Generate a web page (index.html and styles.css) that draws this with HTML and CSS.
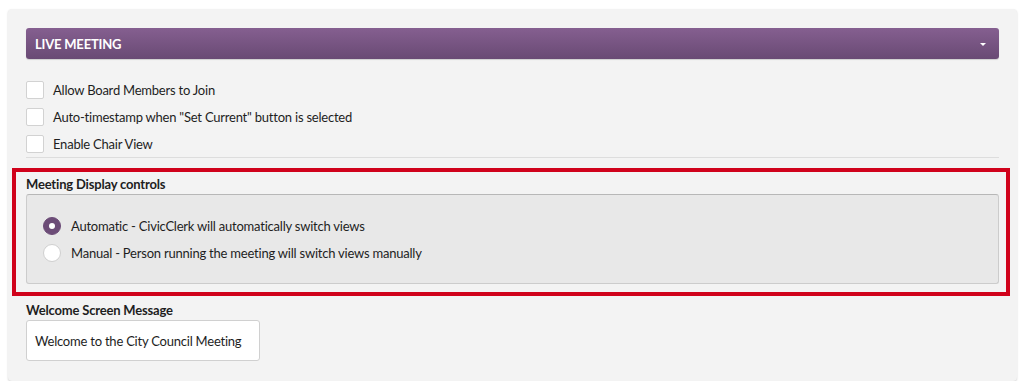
FILE: index.html
```html
<!DOCTYPE html>
<html>
<head>
<meta charset="utf-8">
<link rel="stylesheet" href="styles.css">
</head>
<body>
<div class="panel">
  <div class="panel-head">
    <span class="panel-title">LIVE MEETING</span>
    <span class="caret"></span>
  </div>
  <div class="checks">
    <label class="check-row"><span class="checkbox"></span><span>Allow Board Members to Join</span></label>
    <label class="check-row"><span class="checkbox"></span><span>Auto-timestamp when "Set Current" button is selected</span></label>
    <label class="check-row"><span class="checkbox"></span><span>Enable Chair View</span></label>
  </div>
  <div class="divider"></div>
  <div class="highlight">
    <div class="field-label">Meeting Display controls</div>
    <div class="radio-box">
      <label class="radio-row"><span class="radio checked"></span><span>Automatic - CivicClerk will automatically switch views</span></label>
      <label class="radio-row"><span class="radio"></span><span>Manual - Person running the meeting will switch views manually</span></label>
    </div>
  </div>
  <div class="field-label welcome-label">Welcome Screen Message</div>
  <div class="text-input">Welcome to the City Council Meeting</div>
</div>
</body>
</html>
```
FILE: styles.css
```css
html, body {
  margin: 0;
  padding: 0;
  background: #ffffff;
}
body {
  padding: 9px 8px 0 8px;
  font-family: Lato, "Open Sans", "Liberation Sans", sans-serif;
  font-size: 13px;
  letter-spacing: -0.22px;
  color: #1e1e1e;
}
.panel {
  width: 1009px;
  box-sizing: border-box;
  background: #f3f3f3;
  border-radius: 4px;
  box-shadow: 0 1px 2px rgba(0,0,0,0.18);
  padding: 19px 18px 20px 18px;
}
.panel-head {
  height: 31px;
  border-radius: 3px;
  background: linear-gradient(#855f90, #694a74);
  display: flex;
  align-items: center;
  justify-content: space-between;
  padding: 0 13px 0 9px;
  box-shadow: 0 1px 1px rgba(0,0,0,0.15);
}
.panel-title {
  color: #ffffff;
  font-weight: 700;
  font-size: 13px;
  letter-spacing: -0.2px;
}
.caret {
  width: 0;
  height: 0;
  border-left: 3px solid transparent;
  border-right: 3px solid transparent;
  border-top: 3px solid #ffffff;
  margin-top: 1px;
}
.checks {
  padding-top: 22px;
  display: flex;
  flex-direction: column;
  gap: 9px;
}
.check-row {
  display: flex;
  align-items: center;
  height: 18px;
  gap: 9px;
}
.checkbox {
  width: 16px;
  height: 16px;
  background: #ffffff;
  border: 1px solid #d2d2d2;
  border-radius: 2px;
  flex: none;
}
.divider {
  height: 1px;
  background: #dddddd;
  margin-top: 4px;
}
.highlight {
  border: 4px solid #d0021b;
  margin: 10px -11px 0 -14px;
  padding: 4px 7px 8px 10px;
}
.field-label {
  font-weight: 700;
  font-size: 13px;
  line-height: 16px;
  letter-spacing: -0.18px;
  color: #1e1e1e;
}
.radio-box {
  margin-top: 2px;
  height: 90px;
  box-sizing: border-box;
  background: #e8e8e8;
  border: 1px solid #cccccc;
  border-top-color: #b7b7b7;
  border-radius: 3px;
  padding: 1px 16px 0 16px;
  display: flex;
  flex-direction: column;
  justify-content: center;
  gap: 9px;
}
.radio-row {
  display: flex;
  align-items: center;
  height: 18px;
  gap: 10px;
}
.radio {
  width: 16px;
  height: 16px;
  border-radius: 50%;
  background: #ffffff;
  border: 1px solid #cfcfcf;
  flex: none;
  position: relative;
}
.radio.checked {
  background: #6c4c77;
  border-color: #6c4c77;
}
.radio.checked::after {
  content: "";
  position: absolute;
  left: 5px;
  top: 5px;
  width: 6px;
  height: 6px;
  border-radius: 50%;
  background: #ffffff;
}
.welcome-label {
  margin-top: 6px;
}
.text-input {
  margin-top: 2px;
  width: 234px;
  height: 41px;
  box-sizing: border-box;
  background: #ffffff;
  border: 1px solid #d0d0d0;
  border-radius: 3px;
  padding: 0 8px;
  display: flex;
  align-items: center;
  font-size: 13px;
  color: #1e1e1e;
}
```
